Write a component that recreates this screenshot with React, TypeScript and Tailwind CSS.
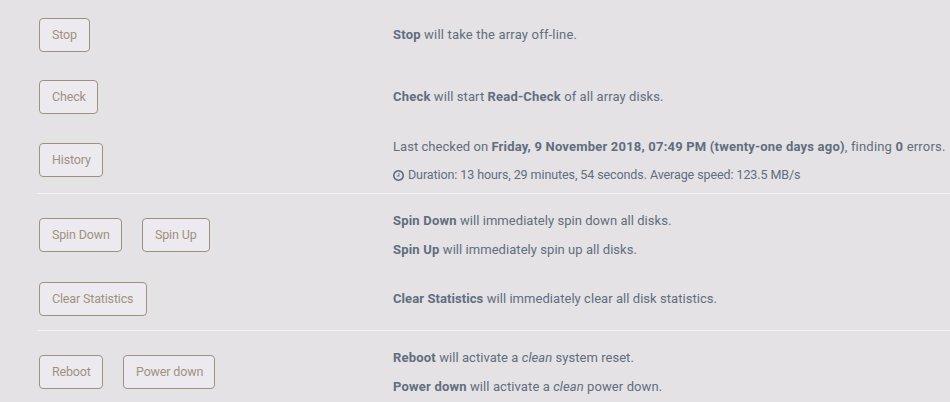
import type { ReactNode } from 'react';

function ActionButton({ label, className }: { label: string; className: string }) {
  return (
    <button
      type="button"
      className={`h-[34px] shrink-0 whitespace-nowrap rounded-[4px] border border-[#9f9180] bg-[#edeaef] pb-0.5 pl-3 text-left text-[12.5px] tracking-[-0.16px] text-[#9f9180] ${className}`}
    >
      {label}
    </button>
  );
}

function Row({ buttons, className, children }: { buttons: ReactNode; className: string; children: ReactNode }) {
  return (
    <div className={`flex items-center ${className}`}>
      <div className="flex w-[354px] shrink-0 gap-5 pl-0.5">{buttons}</div>
      <div className="whitespace-nowrap pl-0.5 [&_b]:tracking-[0.2px]">{children}</div>
    </div>
  );
}

function ClockIcon() {
  return (
    <svg viewBox="0 0 1536 1792" className="mr-1 h-[13px] w-[11px] shrink-0" fill="currentColor">
      <path d="M896 544v448q0 14-9 23t-23 9h-320q-14 0-23-9t-9-23v-64q0-14 9-23t23-9h224v-352q0-14 9-23t23-9h64q14 0 23 9t9 23zm416 352q0-148-73-273t-198-198-273-73-273 73-198 198-73 273 73 273 198 198 273 73 273-73 198-198 73-273zm224 0q0 209-103 385.5t-279.5 279.5-385.5 103-385.5-103-279.5-279.5-103-385.5 103-385.5 279.5-279.5 385.5-103 385.5 103 279.5 279.5 103 385.5z" />
    </svg>
  );
}

export default function App() {
  return (
    <div className="h-[402px] w-[950px] overflow-hidden bg-[#e4e2e4] pl-[37px] font-['Roboto',sans-serif] text-[13px] leading-[29px] tracking-[0.05px] text-[#606e7f]">
      <section className="border-b border-[#f5f4f5] pb-px pt-1">
        <Row className="h-[62px]" buttons={<ActionButton label="Stop" className="w-[51px]" />}>
          <p className="pb-0.5 tracking-[0.18px]"><b>Stop</b> will take the array off-line.</p>
        </Row>
        <Row className="h-[62px]" buttons={<ActionButton label="Check" className="w-[59px]" />}>
          <p className="pb-0.5 tracking-[0.09px]"><b>Check</b> will start <b>Read-Check</b> of all array disks.</p>
        </Row>
        <Row className="h-16" buttons={<ActionButton label="History" className="w-[64px]" />}>
          <p className="pt-0.5 leading-7">
            Last checked on <b>Friday, 9 November 2018, 07:49 PM (twenty-one days ago)</b>
            <span className="tracking-[0.2px]">, finding <b>0</b> errors.</span>
          </p>
          <p className="flex items-center text-[12.5px] leading-7 tracking-[-0.09px]">
            <ClockIcon />
            Duration: 13 hours, 29 minutes, 54 seconds. Average speed: 123.5 MB/s
          </p>
        </Row>
      </section>

      <section className="border-b border-[#f5f4f5] pb-2">
        <Row
          className="h-[82px]"
          buttons={
            <>
              <ActionButton label="Spin Down" className="w-[83px]" />
              <ActionButton label="Spin Up" className="w-[68px]" />
            </>
          }
        >
          <p><b>Spin Down</b> will immediately spin down all disks.</p>
          <p><b>Spin Up</b> will immediately spin up all disks.</p>
        </Row>
        <Row className="h-[46px]" buttons={<ActionButton label="Clear Statistics" className="w-[108px]" />}>
          <p className="pb-0.5"><b className="tracking-[0.08px]!">Clear Statistics</b> will immediately clear all disk statistics.</p>
        </Row>
      </section>

      <section>
        <Row
          className="h-[82px]"
          buttons={
            <>
              <ActionButton label="Reboot" className="w-[64px]" />
              <ActionButton label="Power down" className="w-[92px]" />
            </>
          }
        >
          <p><b>Reboot</b> will activate a <i>clean</i> system reset.</p>
          <p className="tracking-[0.09px]"><b>Power down</b> will activate a <i>clean</i> power down.</p>
        </Row>
      </section>
    </div>
  );
}
